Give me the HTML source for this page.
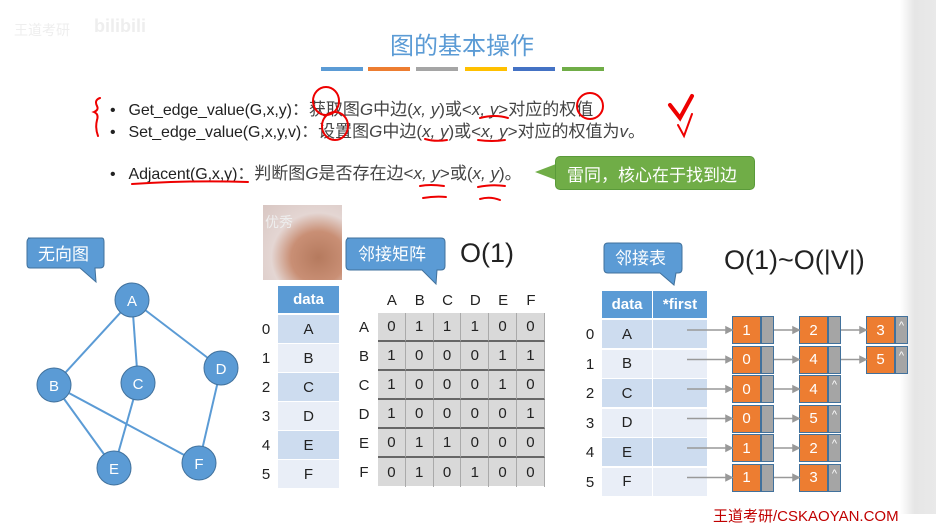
<!DOCTYPE html>
<html><head><meta charset="utf-8"><style>
*{margin:0;padding:0;box-sizing:border-box}
body{width:936px;height:514px;position:relative;overflow:hidden;background:#fff;font-family:"Liberation Sans","Noto Sans CJK SC",sans-serif;color:#222}
.a{position:absolute}
.t{position:absolute;white-space:nowrap}
.bar{position:absolute;top:67px;height:4px;width:42px}
.cell{position:absolute;display:flex;align-items:center;justify-content:center;font-size:15px}
.line{font-size:16px;color:#222;letter-spacing:-0.1px}
.line i{font-style:italic}
.zh{color:#444;letter-spacing:0;font-size:17px}
</style></head><body>
<div class="a" style="left:900px;top:0;width:36px;height:514px;background:linear-gradient(90deg,#fff,#e6e6e6 40%,#e9e9e9)"></div>
<div class="t" style="left:14px;top:20px;font-size:14px;color:#eee">王道考研</div>
<div class="t" style="left:94px;top:16px;font-size:18px;color:#eee;font-weight:bold">bilibili</div>
<div class="t" style="left:390px;top:26px;font-size:24px;color:#5b9bd5;font-family:'Noto Sans CJK SC',sans-serif">图的基本操作</div>
<div class="bar" style="left:321px;background:#5b9bd5"></div>
<div class="bar" style="left:368px;background:#ed7d31"></div>
<div class="bar" style="left:416px;background:#a5a5a5"></div>
<div class="bar" style="left:465px;background:#ffc000"></div>
<div class="bar" style="left:513px;background:#4472c4"></div>
<div class="bar" style="left:562px;background:#70ad47"></div>

<div class="t line" style="left:110px;top:95px">•&nbsp;&nbsp;&nbsp;Get_edge_value(G,x,y)<span class="zh">：获取图<i>G</i>中边(<i>x, y</i>)或&lt;<i>x, y</i>&gt;对应的权值</span></div>
<div class="t line" style="left:110px;top:117px">•&nbsp;&nbsp;&nbsp;Set_edge_value(G,x,y,v)<span class="zh">：设置图<i>G</i>中边(<i>x, y</i>)或&lt;<i>x, y</i>&gt;对应的权值为<i>v</i>。</span></div>
<div class="t line" style="left:110px;top:159px">•&nbsp;&nbsp;&nbsp;Adjacent(G,x,y)<span class="zh">：判断图<i>G</i>是否存在边&lt;<i>x, y</i>&gt;或(<i>x, y</i>)。</span></div>

<svg class="a" style="left:0;top:0" width="936" height="514">
<g fill="none" stroke="#e00" stroke-width="2" stroke-linecap="round">
<path d="M100 98 Q94 100 97 106 Q99 110 94 112 Q99 114 97 120 Q95 128 98 136"/>
<ellipse cx="326" cy="101" rx="13" ry="14"/>
<ellipse cx="335" cy="126" rx="13" ry="14" />
<ellipse cx="590" cy="106" rx="13" ry="13"/>
<path d="M480 118 Q495 114 508 118"/>
<path d="M425 139 Q435 142 447 140 M478 140 Q492 142 505 140"/>
<path d="M132 184 Q190 180 248 182"/>
<path d="M420 186 Q430 184 444 186 M423 198 Q435 196 446 197 M478 187 Q492 184 505 186 M480 199 Q490 196 500 200"/>
<path d="M670 105 L680 118 L692 96" stroke-width="4"/>
<path d="M678 125 L684 136 L692 114"/>
</g>
<path d="M535 172 L556 164 L556 180Z" fill="#70ad47"/>
</svg>
<div class="a" style="left:555px;top:156px;width:200px;height:34px;background:#70ad47;border-radius:5px;border:1px solid #5a9a3a"></div>
<div class="t" style="left:567px;top:161px;font-size:17px;color:#fff">雷同，核心在于找到边</div>

<svg class="a" style="left:0;top:230px" width="260" height="284">
<path d="M28 8 H102 Q104 8 104 12 V34 Q104 38 100 38 H95 L96 52 L80 38 H30 Q27 38 27 34 V12 Q27 8 31 8Z" fill="#5b9bd5" stroke="#41719c"/>
<text x="38" y="30" font-size="17" fill="#fff" font-family="Noto Sans CJK SC">无向图</text>
<g stroke="#5b9bd5" stroke-width="2">
<line x1="132" y1="70" x2="54" y2="155"/><line x1="132" y1="70" x2="138" y2="153"/><line x1="132" y1="70" x2="221" y2="138"/>
<line x1="54" y1="155" x2="114" y2="238"/><line x1="54" y1="155" x2="199" y2="233"/><line x1="138" y1="153" x2="114" y2="238"/><line x1="221" y1="138" x2="199" y2="233"/>
</g>
<g fill="#5b9bd5" stroke="#41719c"><circle cx="132" cy="70" r="17"/><circle cx="54" cy="155" r="17"/><circle cx="138" cy="153" r="17"/><circle cx="221" cy="138" r="17"/><circle cx="114" cy="238" r="17"/><circle cx="199" cy="233" r="17"/></g>
<g fill="#fff" font-size="15" text-anchor="middle" font-family="Liberation Sans"><text x="132" y="76">A</text><text x="54" y="161">B</text><text x="138" y="159">C</text><text x="221" y="144">D</text><text x="114" y="244">E</text><text x="199" y="239">F</text></g>
</svg>

<div class="a" style="left:263px;top:205px;width:79px;height:75px;background:radial-gradient(ellipse at 70% 70%,#b57a5e 0,#c98f75 35%,#e4d6d3 60%,#d8c6c2 100%)"></div>
<div class="t" style="left:265px;top:212px;font-size:14px;color:#eee">优秀</div>

<svg class="a" style="left:340px;top:236px" width="200" height="52">
<path d="M7 2 H101 Q105 2 105 6 V30 Q105 34 101 34 H97 L96 48 L82 34 H10 Q6 34 6 30 V6 Q6 2 10 2Z" fill="#5b9bd5" stroke="#41719c"/>
<text x="18" y="24" font-size="17" fill="#fff" font-family="Noto Sans CJK SC">邻接矩阵</text>
</svg>
<div class="t" style="left:460px;top:238px;font-size:27px;color:#222">O(1)</div>

<div class="cell" style="left:278px;top:286px;width:61px;height:27px;background:#5b9bd5;color:#fff;font-weight:bold">data</div>
<div class="a" style="left:378px;top:313px;width:167px;height:173px;background:#d9d9d9"></div>

<svg class="a" style="left:600px;top:241px" width="120" height="50">
<path d="M8 2 H78 Q82 2 82 6 V28 Q82 32 78 32 H76 L74 44 L60 32 H8 Q4 32 4 28 V6 Q4 2 8 2Z" fill="#5b9bd5" stroke="#41719c"/>
<text x="15" y="23" font-size="17" fill="#fff" font-family="Noto Sans CJK SC">邻接表</text>
</svg>
<div class="t" style="left:724px;top:245px;font-size:27px;color:#222">O(1)~O(|V|)</div>
<div class="cell" style="left:602px;top:291px;width:50px;height:27px;background:#5b9bd5;color:#fff;font-weight:bold">data</div>
<div class="cell" style="left:653px;top:291px;width:54px;height:27px;background:#5b9bd5;color:#fff;font-weight:bold">*first</div>
<div class="t" style="left:713px;top:505px;font-size:15px;color:#c00000">王道考研/CSKAOYAN.COM</div>
<div id="t1"></div>

<script>
var L="ABCDEF",M=["011100","100011","100010","100001","011000","010100"];
var h="";
for(var i=0;i<6;i++){
 var bg=i%2==0?"#cddcef":"#e9eef7";
 var y=315+i*29;
 h+='<div class="cell" style="left:256px;top:'+y+'px;width:20px;height:28px">'+i+'</div>';
 h+='<div class="cell" style="left:278px;top:'+y+'px;width:61px;height:28px;background:'+bg+'">'+L[i]+'</div>';
 h+='<div class="cell" style="left:'+(378+i*27.8)+'px;top:286px;width:27.8px;height:28px">'+L[i]+'</div>';
 var my=313+i*29;
 h+='<div class="cell" style="left:356px;top:'+my+'px;width:16px;height:29px">'+L[i]+'</div>';
 for(var j=0;j<6;j++)h+='<div class="cell" style="left:'+(378+j*27.8)+'px;top:'+my+'px;width:27.8px;height:29px;border-right:1px solid #aaa;border-bottom:'+(i<5?'2px solid #666':'0')+'">'+M[i][j]+'</div>';
 var ay=320+i*29.5;
 h+='<div class="cell" style="left:582px;top:'+ay+'px;width:16px;height:29px">'+i+'</div>';
 h+='<div class="cell" style="left:602px;top:'+ay+'px;width:50px;height:28px;background:'+bg+'">'+L[i]+'</div>';
 h+='<div class="cell" style="left:653px;top:'+ay+'px;width:54px;height:28px;background:'+bg+'"></div>';
}
var LL=[["1","2","3"],["0","4","5"],["0","4"],["0","5"],["1","2"],["1","3"]];
var svg='<svg class="a" style="left:0;top:0" width="936" height="514"><g stroke="#999" stroke-width="1.5" fill="#999">';
for(var i=0;i<6;i++){
 var cy=330+i*29.5,arr=LL[i];
 var xs=[732,799,866];
 var sx=[687,774,841];
 for(var k=0;k<arr.length;k++){
  svg+='<line x1="'+sx[k]+'" y1="'+cy+'" x2="'+(xs[k]-5)+'" y2="'+cy+'"/><path d="M'+(xs[k]-6)+' '+(cy-3)+' L'+(xs[k])+' '+cy+' L'+(xs[k]-6)+' '+(cy+3)+'Z"/>';
  var last=k==arr.length-1;
  h+='<div class="cell" style="left:'+xs[k]+'px;top:'+(cy-14)+'px;width:29px;height:28px;background:#ed7d31;color:#fff;border:1px solid #41719c">'+arr[k]+'</div>';
  h+='<div class="cell" style="left:'+(xs[k]+29)+'px;top:'+(cy-14)+'px;width:13px;height:28px;background:#a5a5a5;color:#fff;font-size:11px;align-items:flex-start;padding-top:3px;border:1px solid #41719c">'+(last?'^':'')+'</div>';
 }
}
svg+='</g></svg>';
document.getElementById('t1').outerHTML=h+svg;
</script>
</body></html>
